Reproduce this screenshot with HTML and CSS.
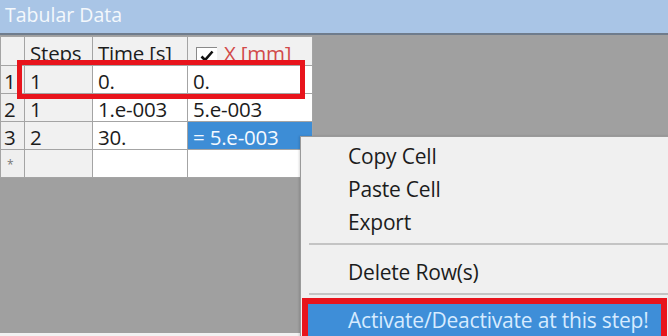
FILE: index.html
```html
<!DOCTYPE html>
<html lang="en">
<head>
  <meta charset="UTF-8" />
  <title>Tabular Data</title>
  <link rel="stylesheet" href="styles.css">
</head>
<body>

<!-- Title -->
<div class="title-bar">Tabular Data</div>

<!-- Grid -->
<div class="grid-area">
  <table class="data-grid">
    <tr class="head">
      <th class="row-head"></th>
      <th class="col-steps">Steps</th>
      <th class="col-time">Time [s]</th>
      <th class="col-x">
        <span class="check">
          <svg width="14" height="12" viewBox="0 0 14 12"><path d="M1.5 6.5 L5 10 L12.5 1.5" fill="none" stroke="#111" stroke-width="2.6"/></svg>
        </span><span class="x-label">X [mm]</span>
      </th>
    </tr>
    <tr>
      <td class="row-head">1</td>
      <td class="steps">1</td>
      <td>0.</td>
      <td>0.</td>
    </tr>
    <tr>
      <td class="row-head">2</td>
      <td class="steps">1</td>
      <td>1.e-003</td>
      <td>5.e-003</td>
    </tr>
    <tr>
      <td class="row-head">3</td>
      <td class="steps">2</td>
      <td>30.</td>
      <td class="selected">= 5.e-003</td>
    </tr>
    <tr>
      <td class="row-head star">*</td>
      <td class="steps"></td>
      <td></td>
      <td></td>
    </tr>
  </table>
  <div class="mark mark-row"></div>
</div>
<div class="bottom-strip"></div>

<!-- Context menu -->
<div class="context-menu">
  <div class="menu-item">Copy Cell</div>
  <div class="menu-item">Paste Cell</div>
  <div class="menu-item">Export</div>
  <div class="menu-sep"></div>
  <div class="menu-item">Delete Row(s)</div>
  <div class="menu-sep"></div>
  <div class="menu-active">
    <div class="menu-item hot">Activate/Deactivate at this step!</div>
  </div>
</div>

</body>
</html>
```

FILE: styles.css
```css
* { box-sizing: border-box; margin: 0; padding: 0; }
body {
  font-family: 'Open Sans', 'Noto Sans', sans-serif;
  width: 668px;
  height: 336px;
  overflow: hidden;
  position: relative;
  background: #f0f0f0;
}

.title-bar {
  height: 35px;
  background: #a9c5e6;
  border-bottom: 2px solid #6f7c8c;
  color: #f4f8fc;
  font-size: 19.5px;
  line-height: 30px;
  padding-left: 5px;
}

.grid-area {
  position: relative;
  height: 298px;
  background: #a0a0a0;
  padding-top: 1px;
}

.bottom-strip { height: 3px; background: #f2f2f2; }

.data-grid {
  border-collapse: collapse;
  font-size: 20.5px;
  letter-spacing: -0.2px;
  color: #1c1c1c;
  table-layout: fixed;
}

.data-grid th, .data-grid td {
  border: 1px solid #a4a4a4;
  height: 28px;
  line-height: 24px;
  padding: 2px 0 0 5px;
  text-align: left;
  font-weight: normal;
  white-space: nowrap;
  overflow: hidden;
  background: #fff;
}

.data-grid .head th { height: 27px; background: #f1f1f1; padding-top: 4px; }
.data-grid .row-head { width: 24px; background: #efefef; padding-left: 3px; }
.data-grid .star { font-size: 12px; color: #777; padding-left: 6px; }
.data-grid .col-steps { width: 68px; }
.data-grid .col-time { width: 95px; }
.data-grid .col-x { width: 125px; }
.data-grid .steps { background: #f1f1f1; }
.data-grid .selected { background: #3d8dd6; color: #f4f9ff; }

.check {
  display: inline-flex;
  align-items: center;
  justify-content: center;
  width: 21px;
  height: 17px;
  border-top: 1px solid #8a8a8a;
  border-left: 1px solid #8a8a8a;
  background: #fff;
  vertical-align: -1px;
  margin: 0 7px 0 3px;
}
.x-label { color: #d24a4a; }

.mark {
  position: absolute;
  border: 5px solid #e8141c;
}
.mark-row { left: 17px; top: 25px; width: 288px; height: 39px; }

.context-menu {
  position: absolute;
  left: 300px;
  top: 136px;
  width: 370px;
  height: 210px;
  background: #f0f0f0;
  border-left: 1px solid #9a9a9a;
  border-top: 1px solid #9a9a9a;
  box-shadow: -1px 0 2px rgba(0,0,0,0.15);
  padding-top: 3px;
  font-size: 21px;
  letter-spacing: -0.2px;
  color: #1c1c1c;
}

.menu-item {
  height: 33px;
  line-height: 33px;
  padding-left: 47px;
}

.menu-sep {
  height: 2px;
  background: #c4c4c4;
  margin: 4px 0 11px 8px;
}

.menu-active {
  margin: -8px 0 0 1px;
  width: 365px;
  height: 50px;
  border: 6px solid #e8141c;
  border-bottom: none;
}

.menu-item.hot {
  background: #3e8ed8;
  color: #d6ebff;
  height: 32px;
  line-height: 32px;
  padding-left: 40px;
}
```
